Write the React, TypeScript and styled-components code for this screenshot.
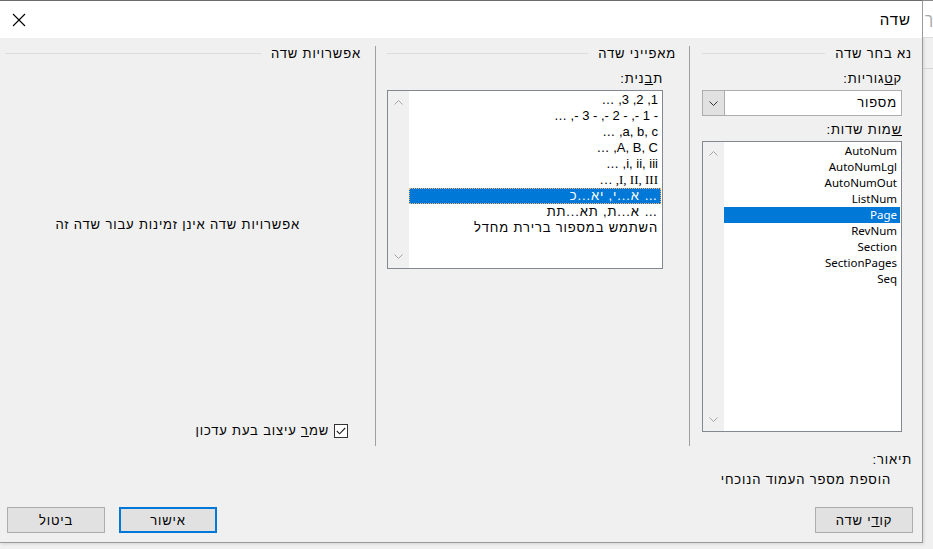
import React from 'react'
import styled, { createGlobalStyle, css } from 'styled-components'

const Global = createGlobalStyle`
  html, body {
    margin: 0;
    padding: 0;
  }
  body {
    background: #f0f0f0;
    font-family: "Liberation Sans", "Noto Sans", sans-serif;
    font-size: 13px;
    letter-spacing: 0.85px;
    color: #000;
    overflow: hidden;
  }
`

const Screen = styled.div`
  width: 933px;
  height: 549px;
  display: flex;
  align-items: flex-start;
`
const Dialog = styled.div`
  direction: rtl;
  width: 923px;
  height: 543px;
  box-sizing: border-box;
  border-top: 1px solid #6b6b6b;
  border-right: 1px solid #9a9a9a;
  border-bottom: 1px solid #9a9a9a;
  background: #f0f0f0;
  box-shadow: 1px 1px 3px rgba(0, 0, 0, 0.12);
  display: flex;
  flex-direction: column;
`
const Backdrop = styled.div`
  flex: 1;
  align-self: stretch;
  overflow: hidden;
  border-top: 1px solid #8a8a8a;
  display: flex;
  flex-direction: column;
`
const BackdropBar = styled.div`
  height: 36px;
  background: #fff;
  border-bottom: 1px solid #dcdcdc;
  color: #a8a8a8;
  font-size: 15px;
  line-height: 36px;
  padding-left: 2px;
`
const BackdropRibbon = styled.div`
  height: 30px;
  border-bottom: 1px solid #d4d4d4;
`

const TitleBar = styled.div`
  height: 37px;
  background: #fff;
  display: flex;
  align-items: center;
  justify-content: space-between;
  padding: 0 11px 0 12px;
`
const Title = styled.div`
  font-size: 15px;
  letter-spacing: 1px;
`
const Close = styled.div`
  width: 14px;
  height: 14px;
  display: flex;
`

const Body = styled.div`
  flex: 1;
  display: flex;
  flex-direction: column;
`
const Columns = styled.div`
  margin-top: 8px;
  height: 400px;
  display: grid;
  grid-template-columns: 233px 314px 375px;
`
const Column = styled.div<{ $sep?: boolean; $pad: string }>`
  display: flex;
  flex-direction: column;
  padding: ${p => p.$pad};
  ${p => p.$sep && css`border-left: 1px solid #a0a0a0;`}
`
const GroupHeader = styled.div`
  display: flex;
  align-items: center;
  height: 15px;
  line-height: 15px;
  white-space: nowrap;

  &::after {
    content: '';
    flex: 1;
    height: 1px;
    background: #dcdcdc;
    margin-right: 10px;
  }
`
const Field = styled.div<{ $inset: number }>`
  margin-right: ${p => p.$inset}px;
  display: flex;
  flex-direction: column;
`
const Label = styled.div<{ $top: number }>`
  line-height: 14px;
  margin-top: ${p => p.$top}px;
  margin-bottom: 4px;
`

const Combo = styled.div`
  height: 26px;
  box-sizing: border-box;
  border: 1px solid #adadad;
  background: #fff;
  display: flex;
`
const ComboText = styled.div`
  flex: 1;
  line-height: 24px;
  padding-right: 4px;
`
const ComboButton = styled.div`
  width: 21px;
  background: #e1e1e1;
  border-right: 1px solid #adadad;
  display: flex;
  align-items: center;
  justify-content: center;
`

const ListBox = styled.div<{ $h: number }>`
  height: ${p => p.$h}px;
  box-sizing: border-box;
  border: 1px solid #828790;
  background: #fff;
  display: flex;
`
const Items = styled.div`
  flex: 1;
  padding: 1px 1px 0 0;
`
type Script = 'hebrew' | 'name' | 'pattern' | 'roman'
const Item = styled.div<{ $selected?: boolean; $focus?: boolean; $script: Script }>`
  height: 16px;
  line-height: 16px;
  padding-right: 3px;
  white-space: nowrap;
  box-sizing: border-box;
  ${p => p.$script === 'name' && css`
    font-family: "Noto Sans", "Liberation Sans", sans-serif;
    font-size: 11.5px;
    letter-spacing: 0;
  `}
  ${p => (p.$script === 'pattern' || p.$script === 'roman') && css`
    letter-spacing: 0;
  `}
  ${p => p.$script === 'roman' && css`
    font-family: "Liberation Serif", serif;
  `}
  ${p => p.$selected && css`
    background: #0078d7;
    color: #fff;
  `}
  ${p => p.$focus && css`
    border: 1px dotted #f7b46b;
    line-height: 14px;
    padding-right: 2px;
  `}
`
const Track = styled.div`
  width: 21px;
  background: #f0f0f0;
  display: flex;
  flex-direction: column;
  align-items: center;
  justify-content: space-between;
  padding: 9px 0;
`

const Message = styled.div`
  margin-top: 157px;
  margin-right: 61px;
  line-height: 14px;
`
const CheckRow = styled.label`
  margin-top: auto;
  margin-bottom: 8px;
  margin-right: 13px;
  display: flex;
  align-items: center;
  gap: 5px;
  line-height: 14px;
`
const CheckBox = styled.span`
  width: 14px;
  height: 14px;
  box-sizing: border-box;
  border: 1px solid #333;
  background: #fff;
  display: flex;
  align-items: center;
  justify-content: center;
`

const Description = styled.div`
  padding-right: 10px;
  line-height: 14px;
  margin-top: 7px;
`
const DescText = styled.div`
  margin-top: 6px;
  margin-right: 21px;
`

const Footer = styled.div`
  margin-top: 20px;
  padding: 0 9px 0 7px;
  display: flex;
  gap: 14px;
`
const Button = styled.div<{ $primary?: boolean; $push?: boolean }>`
  width: 98px;
  height: 26px;
  box-sizing: border-box;
  border: 1px solid #adadad;
  background: #e1e1e1;
  display: flex;
  align-items: center;
  justify-content: center;
  ${p => p.$primary && css`border: 2px solid #0078d7;`}
  ${p => p.$push && css`margin-right: auto;`}
`

const Chevron = ({ up, color = '#a6a6a6' }: { up?: boolean; color?: string }) => (
  <svg width="9" height="5" viewBox="0 0 9 5">
    <path d={up ? 'M0.5 4.5 L4.5 0.5 L8.5 4.5' : 'M0.5 0.5 L4.5 4.5 L8.5 0.5'} fill="none" stroke={color} strokeWidth="1" />
  </svg>
)

const fieldNames = ['AutoNum', 'AutoNumLgl', 'AutoNumOut', 'ListNum', 'Page', 'RevNum', 'Section', 'SectionPages', 'Seq']
const formats: { text: string; script: Script }[] = [
  { text: '1, 2, 3, …', script: 'pattern' },
  { text: '- 1 -, - 2 -, - 3 -, …', script: 'pattern' },
  { text: 'a, b, c, …', script: 'pattern' },
  { text: 'A, B, C, …', script: 'pattern' },
  { text: 'i, ii, iii, …', script: 'pattern' },
  { text: 'I, II, III, …', script: 'roman' },
  { text: '… א...י, יא...כ', script: 'hebrew' },
  { text: '… א...ת, תא...תת', script: 'hebrew' },
  { text: 'השתמש במספור ברירת מחדל', script: 'hebrew' },
]

const App = () => {
  return (
    <Screen>
      <Global />
      <Dialog>
        <TitleBar>
          <Title>שדה</Title>
          <Close>
            <svg width="14" height="14" viewBox="0 0 14 14">
              <path d="M1 1 L13 13 M13 1 L1 13" stroke="#000" strokeWidth="1.1" />
            </svg>
          </Close>
        </TitleBar>
        <Body>
          <Columns>
            <Column $sep $pad="0 10px 0 12px">
              <GroupHeader>נא בחר שדה</GroupHeader>
              <Field $inset={10}>
                <Label $top={11}>ק<u>ט</u>גוריות:</Label>
                <Combo>
                  <ComboText>מספור</ComboText>
                  <ComboButton><Chevron color="#333" /></ComboButton>
                </Combo>
                <Label $top={7}><u>ש</u>מות שדות:</Label>
                <ListBox $h={291}>
                  <Items>
                    {fieldNames.map(n => (
                      <Item key={n} $script="name" $selected={n === 'Page'}>{n}</Item>
                    ))}
                  </Items>
                  <Track>
                    <Chevron up />
                    <Chevron />
                  </Track>
                </ListBox>
              </Field>
            </Column>
            <Column $sep $pad="0 13px 0 11px">
              <GroupHeader>מאפייני שדה</GroupHeader>
              <Field $inset={13}>
                <Label $top={11}>ת<u>ב</u>נית:</Label>
                <ListBox $h={179}>
                  <Items>
                    {formats.map((f, i) => (
                      <Item key={f.text} $script={f.script} $selected={i === 6} $focus={i === 6}>
                        {f.text}
                      </Item>
                    ))}
                  </Items>
                  <Track>
                    <Chevron up />
                    <Chevron />
                  </Track>
                </ListBox>
              </Field>
            </Column>
            <Column $pad="0 14px 0 5px">
              <GroupHeader>אפשרויות שדה</GroupHeader>
              <Message>אפשרויות שדה אינן זמינות עבור שדה זה</Message>
              <CheckRow>
                <CheckBox>
                  <svg width="10" height="8" viewBox="0 0 10 8">
                    <path d="M0.8 4 L3.6 6.8 L9.2 1" fill="none" stroke="#222" strokeWidth="1.1" />
                  </svg>
                </CheckBox>
                <span>שמ<u>ר</u> עיצוב בעת עדכון</span>
              </CheckRow>
            </Column>
          </Columns>
          <Description>
            <div>תיאור:</div>
            <DescText>הוספת מספר העמוד הנוכחי</DescText>
          </Description>
          <Footer>
            <Button>קו<u>ד</u>י שדה</Button>
            <Button $primary $push>אישור</Button>
            <Button>ביטול</Button>
          </Footer>
        </Body>
      </Dialog>
      <Backdrop>
        <BackdropBar>ך</BackdropBar>
        <BackdropRibbon />
      </Backdrop>
    </Screen>
  )
}

export default App
